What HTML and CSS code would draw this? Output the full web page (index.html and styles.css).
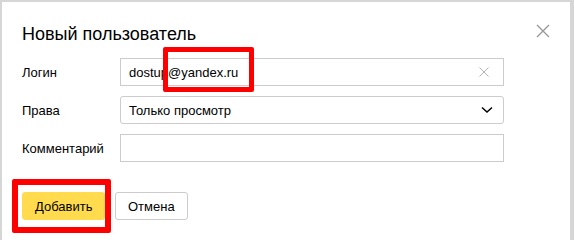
FILE: index.html
```html
<!DOCTYPE html>
<html lang="ru">
<head>
    <meta charset="UTF-8">
    <title>Новый пользователь</title>
    <link rel="stylesheet" href="styles.css">
</head>
<body>
    <div class="dialog">
        <button class="close-btn" aria-label="Закрыть">
            <svg width="14" height="14" viewBox="0 0 14 14"><path d="M1 1L13 13M13 1L1 13" stroke="#999" stroke-width="1.4" fill="none"/></svg>
        </button>
        <h2 class="title">Новый пользователь</h2>

        <div class="form">
            <div class="row">
                <label class="label">Логин</label>
                <div class="field">
                    <span class="value">dostup@yandex.ru</span>
                    <svg class="clear" width="10" height="10" viewBox="0 0 10 10"><path d="M0.5 0.5L9.5 9.5M9.5 0.5L0.5 9.5" stroke="#b3b3b3" stroke-width="1" fill="none"/></svg>
                </div>
            </div>
            <div class="row">
                <label class="label">Права</label>
                <div class="field select">
                    <span class="value">Только просмотр</span>
                    <svg class="arrow" width="12" height="8" viewBox="0 0 12 8"><path d="M1 1.5L6 6L11 1.5" stroke="#000" stroke-width="1.5" fill="none"/></svg>
                </div>
            </div>
            <div class="row">
                <label class="label">Комментарий</label>
                <div class="field"></div>
            </div>
        </div>

        <div class="actions">
            <button class="btn btn-primary">Добавить</button>
            <button class="btn">Отмена</button>
        </div>

        <!-- пометки -->
        <div class="mark mark-login"></div>
        <div class="mark mark-add"></div>
    </div>
</body>
</html>
```

FILE: styles.css
```css
* {
    margin: 0;
    padding: 0;
    box-sizing: border-box;
    font-family: 'Liberation Sans', Arial, sans-serif;
}

body {
    background: #d6d6d6;
    width: 574px;
    height: 240px;
    overflow: hidden;
}

.dialog {
    position: relative;
    margin: 2px 4px 0 2px;
    height: 238px;
    background: #fff;
    padding: 21px 0 0 20px;
}

.title {
    font-size: 18px;
    line-height: 22px;
    font-weight: normal;
    color: #000;
    margin-bottom: 13px;
}

.close-btn {
    position: absolute;
    top: 22px;
    right: 20px;
    border: none;
    background: none;
    width: 14px;
    height: 14px;
    display: flex;
}

.form {
    display: flex;
    flex-direction: column;
    gap: 10px;
}

.row {
    display: flex;
    align-items: center;
}

.label {
    width: 98px;
    font-size: 13px;
    color: #000;
}

.field {
    width: 384px;
    height: 28px;
    border: 1px solid #ccc;
    display: flex;
    align-items: center;
    justify-content: space-between;
    padding: 0 12px 0 8px;
    font-size: 13px;
    color: #000;
}

.select {
    border-radius: 3px;
    padding-right: 10px;
}

.clear {
    margin-right: 2px;
}

.actions {
    display: flex;
    gap: 10px;
    margin-top: 30px;
}

.btn {
    height: 28px;
    padding: 0 12px;
    border: 1px solid #ccc;
    border-radius: 3px;
    background: #fff;
    font-size: 13px;
    color: #000;
}

.btn-primary {
    width: 83px;
    background: #ffdb4d;
    border-color: #ffdb4d;
}

/* красные рамки поверх */
.mark {
    position: absolute;
    border: 5px solid #f00;
    border-radius: 2px;
}

.mark-login {
    left: 161px;
    top: 45px;
    width: 91px;
    height: 45px;
}

.mark-add {
    left: 10px;
    top: 177px;
    width: 99px;
    height: 54px;
    border-width: 6px;
}
```
